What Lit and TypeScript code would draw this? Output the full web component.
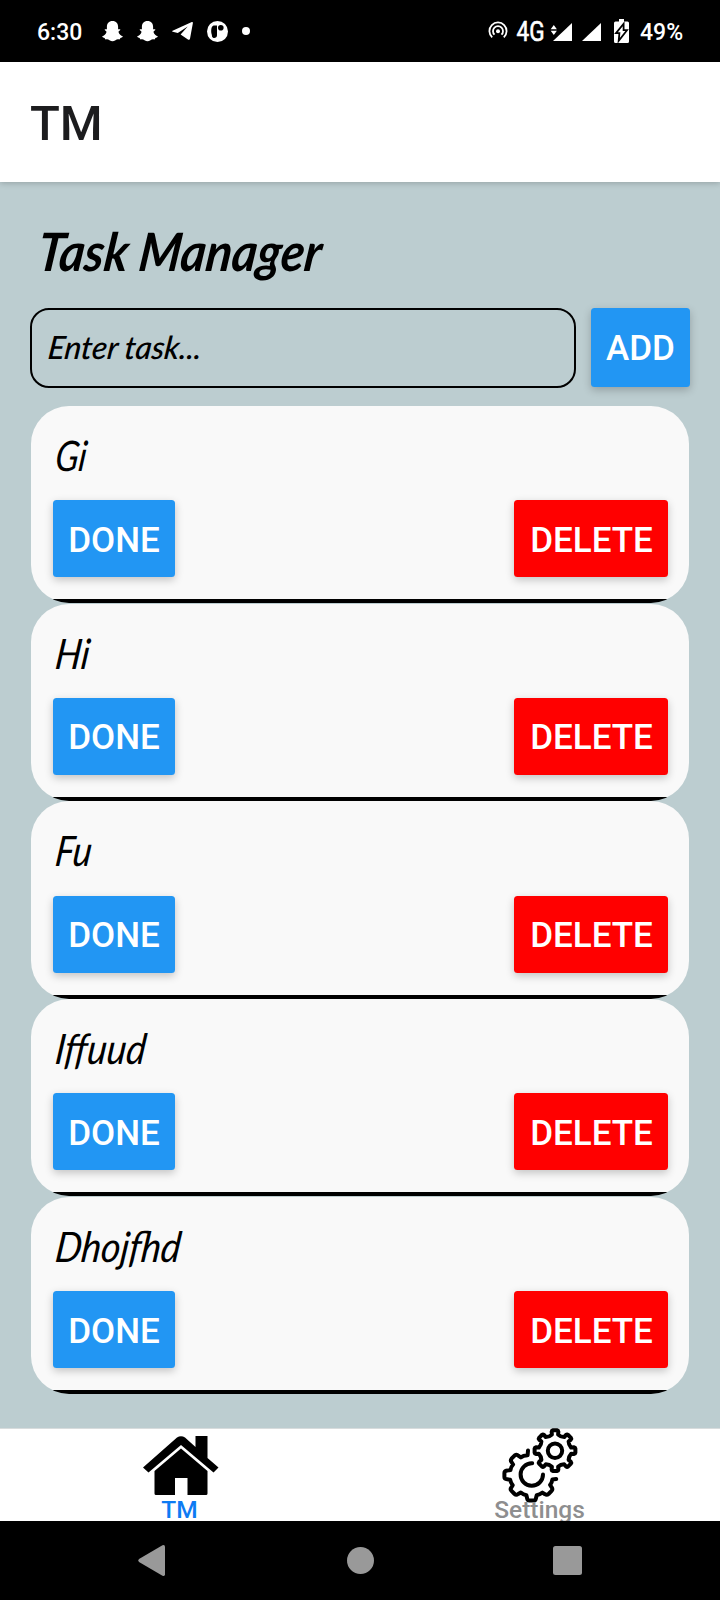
import { LitElement, html, css, svg } from "lit";
import { customElement, property, state } from "lit/decorators.js";

interface Task {
  name: string;
  width: number;
}

/** Outline of a cog from one tooth angle to another (degrees, clockwise). */
function cog(cx: number, cy: number, outer: number, root: number, from: number, teeth: number, close: boolean): string {
  const pt = (r: number, deg: number) => {
    const a = (deg * Math.PI) / 180;
    return `${(cx + r * Math.cos(a)).toFixed(2)} ${(cy + r * Math.sin(a)).toFixed(2)}`;
  };
  let d = "";
  for (let i = 0; i < teeth; i++) {
    const a = from + i * 45;
    d += `${i === 0 ? "M" : "L"}${pt(root, a - 11)}`;
    d += `L${pt(outer - 1.2, a - 10)}Q${pt(outer, a - 9)} ${pt(outer, a - 6)}`;
    d += `L${pt(outer, a + 6)}Q${pt(outer, a + 9)} ${pt(outer - 1.2, a + 10)}`;
    d += `L${pt(root, a + 11)}Q${pt(root - 1.6, a + 22.5)} ${pt(root, a + 34)}`;
  }
  return close ? d + "Z" : d;
}

const ghost = svg`<path d="M10.5 0C6.8 0 4.9 2.6 4.9 5.8V8.2C4.2 8.5 3.1 8 2.7 8.6C2.3 9.6 4.6 9.9 4.5 11C4.1 13.2 1.9 14.7.3 15.2C-.3 16 2 16.7 2.6 17C3 17.8 3.1 18.4 3.8 18.4C5.2 18.1 6.3 18.2 7.5 19.2C9.6 20.5 11.4 20.5 13.5 19.2C14.7 18.2 15.8 18.1 17.2 18.4C17.9 18.4 18 17.8 18.4 17C19 16.7 21.3 16 20.7 15.2C19.1 14.7 16.9 13.2 16.5 11C16.4 9.9 18.7 9.6 18.3 8.6C17.9 8 16.8 8.5 16.1 8.2V5.8C16.1 2.6 14.2 0 10.5 0Z"/>`;

@customElement("script-label")
export class ScriptLabel extends LitElement {
  @property() text = "";
  @property({ type: Number }) width = 100;
  @property({ type: Number }) size = 40;
  @property({ type: Number }) weight = 400;

  static styles = css`
    :host { display: block; }
    svg { display: block; overflow: visible; }
    text { font-family: "Lato", sans-serif; font-style: italic; fill: #000; }
  `;

  render() {
    const slant = this.size * 0.04;
    return html`<svg width=${this.width} height=${this.size}>
      <g transform="translate(0 ${this.size * 0.78}) skewX(-7)">
        <text x="0" y="0" font-size=${this.size} font-weight=${this.weight}
          textLength=${this.width - slant} lengthAdjust="spacingAndGlyphs">${this.text}</text>
      </g>
    </svg>`;
  }
}

@customElement("app-root")
export class AppRoot extends LitElement {
  @state() private tasks: Task[] = [
    { name: "Gi", width: 33 },
    { name: "Hi", width: 36 },
    { name: "Fu", width: 38 },
    { name: "Iffuud", width: 92 },
    { name: "Dhojfhd", width: 127 },
  ];

  static styles = css`
    :host {
      display: flex;
      flex-direction: column;
      width: 720px;
      height: 1600px;
      overflow: hidden;
      background: #bccdd0;
      font-family: "Roboto", sans-serif;
      font-weight: 500;
    }
    * { box-sizing: border-box; }
    svg { display: block; flex: none; }
    .status {
      height: 62px;
      flex: none;
      background: #000;
      color: #fff;
      display: flex;
      padding: 0 37px;
      justify-content: space-between;
      align-items: center;
      font-size: 23px;
    }
    .status svg { fill: #fff; }
    .left { display: flex; align-items: center; gap: 14px; }
    .time { width: 51px; padding-top: 2px; }
    .right { display: flex; align-items: center; }
    .percent { margin-left: 11px; padding-top: 2px; width: 43px; }
    .net { margin-left: 8px; overflow: visible; }
    .sig1 { margin-left: 6px; overflow: visible; }
    .sig2 { margin-left: 10px; }
    .batt { margin-left: 13px; }
    .header {
      height: 120px;
      flex: none;
      background: #fff;
      color: #1c1c1e;
      padding: 3px 0 0 30px;
      display: flex;
      align-items: center;
      font-size: 49px;
      box-shadow: 0 1px 6px rgba(0, 0, 0, 0.22);
      z-index: 1;
    }
    .content { flex: 1; padding: 46px 30px 0; }
    .title { padding: 2px 0 0 6px; height: 80px; }
    .row { display: flex; justify-content: space-between; height: 80px; }
    .entry {
      width: 546px;
      height: 80px;
      border: 2px solid #000;
      border-radius: 19px;
      padding: 24px 0 0 15px;
    }
    .btn {
      height: 77px;
      border-radius: 3.5px;
      background: #2296f3;
      color: #fff;
      font-size: 35px;
      padding-top: 3px;
      display: flex;
      align-items: center;
      justify-content: center;
      box-shadow: 0 3px 8px rgba(0, 0, 0, 0.22);
    }
    .add { width: 99px; height: 79px; padding-top: 2px; }
    .done { width: 122px; }
    .delete { width: 154px; background: #f00; padding-left: 1px; }
    .list { display: flex; flex-direction: column; gap: 0.6px; margin: 17.9px 1px 0 0.5px; }
    .card {
      height: 197.15px;
      border-radius: 38px;
      background: linear-gradient(to top, #000 4px, #f9f9f9 4px);
      padding: 29px 21px 0 22.5px;
    }
    .name { height: 65.3px; padding: 3px 0 0 1px; }
    .actions { display: flex; justify-content: space-between; }
    .tabs {
      height: 93px;
      flex: none;
      background: #fff;
      border-top: 1px solid #d8dcdd;
      display: grid;
      grid-template-columns: 1fr 1fr;
      overflow: visible;
    }
    .tab {
      height: 92px;
      display: flex;
      flex-direction: column;
      align-items: center;
      font-size: 24.5px;
      line-height: 28px;
      color: #8e8e8f;
    }
    .tab svg { height: 67px; overflow: visible; margin-left: 2px; }
    .tab span { margin-right: 1px; }
    .active { color: #0d7bf3; }
    .softkeys { height: 79px; flex: none; background: #000; z-index: 1; }
  `;

  render() {
    return html`
      <div class="status">
        <div class="left">
          <span class="time">6:30</span>
          <svg width="21" height="21">${ghost}</svg>
          <svg width="21" height="21">${ghost}</svg>
          <svg width="21" height="20"><path d="M.6 9.7L19.8 1.1Q21 .8 20.9 2L18 17.8Q17.7 19.3 16.3 18.7L8.6 13.6L15.7 5.6L5.8 12L.8 10.8Q-.5 10.3 .6 9.7Z"/></svg>
          <svg width="21" height="21"><circle cx="10.5" cy="10.5" r="10.5"/><path d="M10 4.6H7.5C4.8 4.6 4.2 7 4.2 10.8C4.2 12.6 5 13.4 5 15.2C5.2 17 7.5 17.4 8.8 16.6C10 16 10 15 10 13.6Z" fill="#000"/><circle cx="13.8" cy="6.8" r="2.8" fill="#000"/></svg>
          <svg width="8" height="8"><circle cx="4" cy="4" r="4"/></svg>
        </div>
        <div class="right">
          <svg width="20" height="20"><g fill="none" stroke="#fff" stroke-width="1.8"><path d="M4.2 16.4A8.6 8.6 0 1 1 15.8 16.4"/><path d="M6.5 13.7A5 5 0 1 1 13.5 13.7"/></g><circle cx="10" cy="10.2" r="2"/></svg>
          <svg class="net" width="29" height="34"><text x="0.5" y="26.5" font-size="28" font-weight="400" stroke="#fff" stroke-width=".6" textLength="28" lengthAdjust="spacingAndGlyphs">4G</text></svg>
          <svg class="sig1" width="21" height="19"><path d="M21 1V19H2Z"/><path d="M-.3 7.2L2.8 3L5.9 7.2ZM-.3 8.8H5.9L2.8 13Z"/></svg>
          <svg class="sig2" width="19" height="19"><path d="M19 1V19H0Z"/></svg>
          <svg class="batt" width="15" height="24"><path d="M5 0H10V2.5H13.5Q15 2.5 15 4V22.5Q15 24 13.5 24H1.5Q0 24 0 22.5V4Q0 2.5 1.5 2.5H5Z"/><path d="M9.6 4.8L2 14.2H5.4L4.7 21.8L13 11.2H9.6Z" fill="#fff" stroke="#000" stroke-width="1.8"/></svg>
          <span class="percent">49%</span>
        </div>
      </div>
      <div class="header">TM</div>
      <div class="content">
        <div class="title"><script-label text="Task Manager" .width=${286} .size=${53} .weight=${700}></script-label></div>
        <div class="row">
          <div class="entry"><script-label text="Enter task..." .width=${155} .size=${32} .weight=${500}></script-label></div>
          <div class="btn add">ADD</div>
        </div>
        <div class="list">
          ${this.tasks.map(
            (t) => html`<div class="card">
              <div class="name"><script-label .text=${t.name} .width=${t.width} .size=${42}></script-label></div>
              <div class="actions">
                <div class="btn done">DONE</div>
                <div class="btn delete">DELETE</div>
              </div>
            </div>`
          )}
        </div>
      </div>
      <div class="tabs">
        <div class="tab active">
          <svg width="76" height="67" viewBox="0 0 76 67">
            <path d="M0 38.5L34 8.5Q38 5.8 42 8.5L52.5 18V7H64.5V29L75.5 38.5L70.5 43.5L38 16L5.5 43.5Z"/>
            <path d="M11.5 42L38 19.5L64.5 42V64.5Q64.5 66 63 66H44.5V49H32V66H13Q11.5 66 11.5 64.5Z"/>
          </svg>
          <span>TM</span>
        </div>
        <div class="tab">
          <svg width="76" height="67" viewBox="0 0 76 67" fill="none" stroke="#000" stroke-width="4" stroke-linejoin="round" stroke-linecap="round">
            <path d=${cog(52, 21.7, 20.5, 16.4, -90, 8, true)} />
            <circle cx="52" cy="21.7" r="7.2" />
            <g transform="translate(-.8 0)">
              <path d="M25.8 21.6L25.4 26.3Q21 26.5 18.6 28.4L16.4 26.9Q14.5 25 12.6 26.4L9.3 29.7Q8 31.2 9.3 33L10.9 35.5Q8.6 38 8.3 41L5 41.6Q2.2 42 2.2 44V48Q2.2 50 5 50.3L8 50.8Q8.6 53.7 10.5 56.3L9 58.7Q7.8 60.4 9.3 61.8L12.4 65Q14 66.5 16 65L18.6 63.5Q21 65.5 24.2 66.2L24.9 69.3Q25.2 71.6 27.2 71.6H31.5Q33.3 71.6 33.7 69.4L34.5 66.2Q37.5 65.5 40.2 63.6L42.8 65.2Q44.6 66.5 46.3 65L49.4 61.8Q50.8 60.3 49.5 58.4L47.9 56Q49.8 53.4 50.2 50.4L54 50"/>
              <path d="M30 34.3A11.2 11.2 0 1 0 40.8 45.5" />
            </g>
          </svg>
          <span>Settings</span>
        </div>
      </div>
      <div class="softkeys">
        <svg width="720" height="79" fill="#999">
          <path d="M139 38.1L162.5 24.2Q165 23.5 165 26V53.5Q165 55.5 162.5 54.8L139 41Q137.3 39.5 139 38.1Z"/>
          <circle cx="360.5" cy="39.5" r="13.5"/>
          <rect x="553" y="25" width="29" height="29" rx="2.5"/>
        </svg>
      </div>
    `;
  }
}
